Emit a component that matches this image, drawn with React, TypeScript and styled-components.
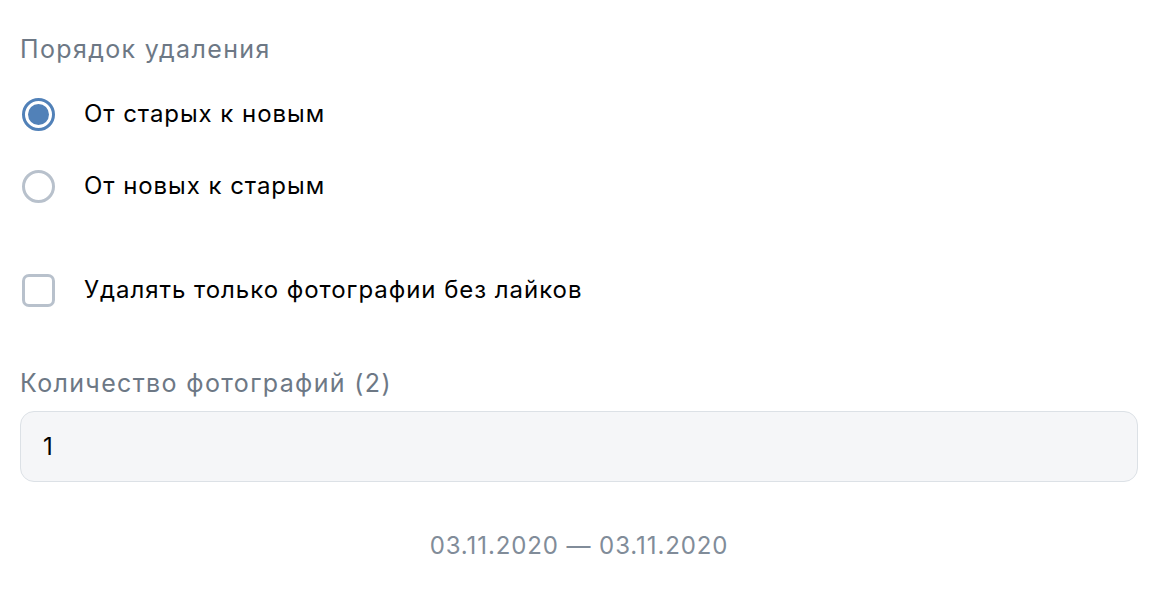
import React, { useState } from "react";
import styled, { createGlobalStyle } from "styled-components";

const GlobalStyle = createGlobalStyle`
  html, body {
    margin: 0;
    padding: 0;
    background: #ffffff;
  }
  body {
    font-family: Inter, Roboto, "Noto Sans", "Liberation Sans", sans-serif;
    -webkit-font-smoothing: antialiased;
  }
`;

const Page = styled.div`
  display: flex;
  flex-direction: column;
  padding: 33px 18px 0 20px;
`;

const Header = styled.div<{ $top?: number }>`
  font-size: 25px;
  line-height: 32px;
  letter-spacing: 1.35px;
  color: #6d7885;
  margin-top: ${(p) => p.$top ?? 0}px;
`;

const Group = styled.div<{ $top?: number }>`
  display: flex;
  flex-direction: column;
  margin-top: ${(p) => p.$top ?? 0}px;
`;

const Row = styled.label`
  display: flex;
  align-items: center;
  height: 72px;
  gap: 29px;
  padding-left: 2px;
  cursor: pointer;
`;

const RowText = styled.span`
  font-size: 24px;
  line-height: 32px;
  letter-spacing: 0.95px;
  color: #000000;
`;

const RadioCircle = styled.span<{ $checked: boolean }>`
  box-sizing: border-box;
  width: 33px;
  height: 33px;
  border-radius: 50%;
  border: 3px solid ${(p) => (p.$checked ? "#5181b8" : "#b8c1cc")};
  display: flex;
  align-items: center;
  justify-content: center;
  flex-shrink: 0;
  &::after {
    content: "";
    width: 21px;
    height: 21px;
    border-radius: 50%;
    background: #5181b8;
    display: ${(p) => (p.$checked ? "block" : "none")};
  }
`;

const CheckBox = styled.span`
  box-sizing: border-box;
  width: 33px;
  height: 33px;
  border-radius: 7px;
  border: 3px solid #b8c1cc;
  flex-shrink: 0;
`;

const Input = styled.input`
  box-sizing: border-box;
  margin-top: 12px;
  width: 100%;
  height: 71px;
  border: 1px solid #dce1e6;
  border-radius: 14px;
  background: #f5f6f8;
  padding: 0 22px;
  font-family: inherit;
  font-size: 24px;
  letter-spacing: 0.95px;
  color: #000000;
  outline: none;
`;

const DateRange = styled.div`
  margin-top: 48px;
  text-align: center;
  font-size: 24px;
  line-height: 32px;
  letter-spacing: 0.9px;
  color: #818c99;
`;

export default function App() {
  const [order, setOrder] = useState("old");
  const [count, setCount] = useState("1");

  return (
    <>
      <GlobalStyle />
      <Page>
        <Header>Порядок удаления</Header>
        <Group $top={13}>
          <Row onClick={() => setOrder("old")}>
            <RadioCircle $checked={order === "old"} />
            <RowText>От старых к новым</RowText>
          </Row>
          <Row onClick={() => setOrder("new")}>
            <RadioCircle $checked={order === "new"} />
            <RowText>От новых к старым</RowText>
          </Row>
        </Group>
        <Group $top={32}>
          <Row>
            <CheckBox />
            <RowText>Удалять только фотографии без лайков</RowText>
          </Row>
        </Group>
        <Header $top={41}>Количество фотографий (2)</Header>
        <Input value={count} onChange={(e) => setCount(e.target.value)} />
        <DateRange>03.11.2020 — 03.11.2020</DateRange>
      </Page>
    </>
  );
}
